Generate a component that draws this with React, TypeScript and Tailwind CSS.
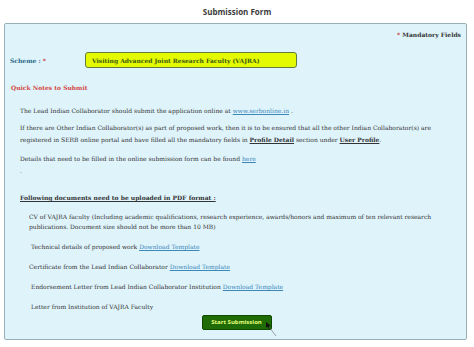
export default function App() {
  const serif = { fontFamily: '"DejaVu Serif", serif' };
  const link = "text-[#3a87b8] underline";
  return (
    <div className="w-[474px] h-[347px] bg-white overflow-hidden" style={serif}>
      <h1
        className="text-center text-[8px] font-bold text-[#3b3b3b] pt-[6px] h-[23px]"
        style={{ fontFamily: '"Open Sans", sans-serif' }}
      >
        Submission Form
      </h1>
      <div className="mx-[4px] w-[463px] h-[317px] border border-[#9ab0b8] rounded-[2px] bg-[#dff3fb] relative text-[6px] text-[#333]">
        <div className="text-right pr-[5px] pt-[6px] font-bold text-[#333]">
          <span className="text-[#c33]">*</span> Mandatory Fields
        </div>
        <div className="flex items-center mt-[13px] pl-[5px]">
          <span className="w-[75px] font-bold text-[#2b6a8a]">
            Scheme : <span className="text-[#c33]">*</span>
          </span>
          <div className="w-[212px] h-[16px] rounded-[3px] border border-[#617b45] bg-[#e4fa00] flex items-center pl-[6px] font-bold text-[#3a5a10]">
            Visiting Advanced Joint Research Faculty (VAJRA)
          </div>
        </div>
        <div className="mt-[15px] pl-[6px] font-bold text-[#d2483f]">Quick Notes to Submit</div>
        <div className="pl-[15px] pr-[8px] mt-[13px] leading-[12px]">
          <p>
            The Lead Indian Collaborator should submit the application online at{" "}
            <span className={link}>www.serbonline.in</span> .
          </p>
          <p className="mt-[5px]">
            If there are Other Indian Collaborator(s) as part of proposed work, then it is to be ensured that all the
            other Indian Collaborator(s) are registered in SERB online portal and have filled all the mandatory fields in{" "}
            <span className="font-bold underline">Profile Detail</span> section under{" "}
            <span className="font-bold underline">User Profile</span>.
          </p>
          <p className="mt-[7px]">
            Details that need to be filled in the online submission form can be found{" "}
            <span className={link}>here</span>
          </p>
          <p className="h-[12px]">.</p>
        </div>
        <div className="pl-[15px] mt-[16px] font-bold underline">Following documents need to be uploaded in PDF format :</div>
        <div className="pl-[24px] pr-[14px] mt-[10px] leading-[10px]">
          <p>
            CV of VAJRA faculty (Including academic qualifications, research experience, awards/honors and maximum of
            ten relevant research publications. Document size should not be more than 10 MB)
          </p>
          <p className="mt-[10px] pl-[2px]">
            Technical details of proposed work <span className={link}>Download Template</span>
          </p>
          <p className="mt-[10px]">
            Certificate from the Lead Indian Collaborator <span className={link}>Download Template</span>
          </p>
          <p className="mt-[10px] pl-[2px]">
            Endorsement Letter from Lead Indian Collaborator Institution{" "}
            <span className={link}>Download Template</span>
          </p>
          <p className="mt-[10px] pl-[2px]">Letter from Institution of VAJRA Faculty</p>
        </div>
        <div className="flex justify-center mt-[3px] pl-[2px]">
          <button
            className="relative h-[15px] w-[70px] rounded-[2px] bg-[#1f6b06] border border-[#0f4a00] text-[6px] font-bold text-[#e6ff7a]"
            style={{ fontFamily: '"Open Sans", sans-serif' }}
          >
            Start Submission
            <svg className="absolute left-[63px] top-[6px]" width="12" height="14" viewBox="0 0 12 14">
              <path d="M0 0 L0 6 L1.5 4.6 L3 7 L4 6.5 L2.8 4.2 L4.8 4 Z" fill="#111" />
              <path d="M3 5 L10 14" stroke="#666" strokeWidth="0.6" />
            </svg>
          </button>
        </div>
      </div>
    </div>
  );
}
